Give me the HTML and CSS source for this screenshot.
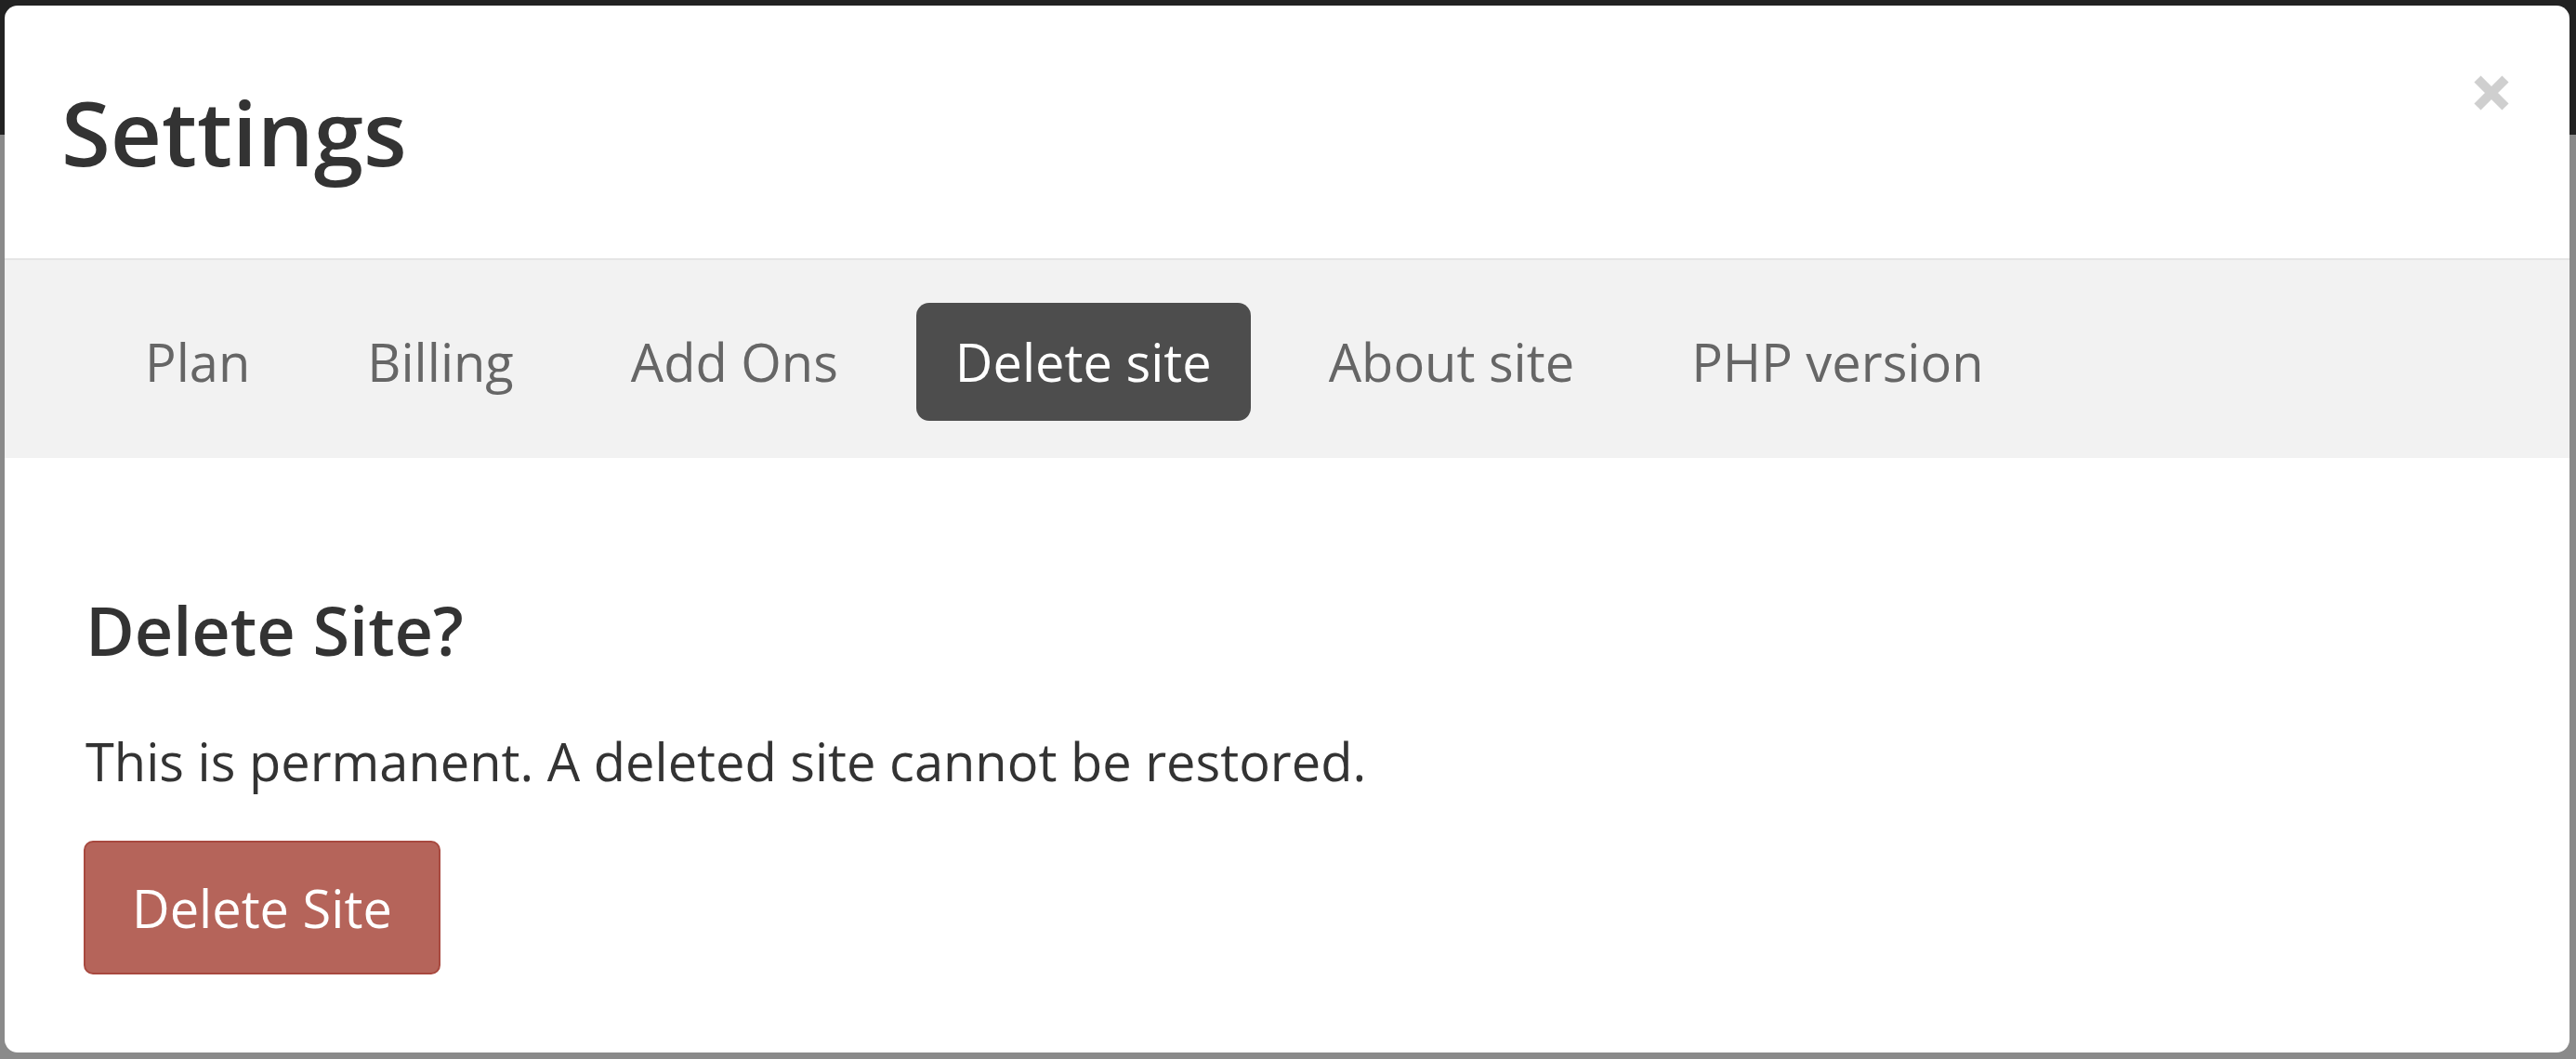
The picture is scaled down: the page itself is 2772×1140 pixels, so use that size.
FILE: index.html
```html
<!DOCTYPE html>
<html lang="en">
<head>
<meta charset="utf-8">
<title>Settings</title>
<link rel="stylesheet" href="styles.css">
</head>
<body>
<div class="modal">
  <div class="modal-header">
    <h1 class="modal-title">Settings</h1>
    <button class="close" aria-label="Close">
      <svg width="38" height="38" viewBox="0 0 38 38"><path d="M4 4L34 34M34 4L4 34" stroke="#cfcfcf" stroke-width="10" fill="none"/></svg>
    </button>
  </div>
  <nav class="tabs">
    <a class="tab">Plan</a>
    <a class="tab">Billing</a>
    <a class="tab">Add Ons</a>
    <a class="tab active">Delete site</a>
    <a class="tab">About site</a>
    <a class="tab">PHP version</a>
  </nav>
  <div class="modal-body">
    <h2 class="heading">Delete Site?</h2>
    <p class="text">This is permanent. A deleted site cannot be restored.</p>
    <button class="btn-danger">Delete Site</button>
  </div>
</div>
</body>
</html>
```

FILE: styles.css
```css
html, body {
  margin: 0;
  padding: 0;
}
body {
  width: 2772px;
  height: 1140px;
  overflow: hidden;
  background: linear-gradient(to bottom, #222222 0, #222222 145px, #8a8a8a 145px, #8a8a8a 100%);
  font-family: "Open Sans", "Liberation Sans", sans-serif;
  color: #333333;
}
.modal {
  margin: 6px 7px 0 5px;
  height: 1127px;
  background: #ffffff;
  border-radius: 14px;
  overflow: hidden;
  box-sizing: border-box;
}
.modal-header {
  position: relative;
  padding: 83px 59px 83px 61px;
  border-bottom: 2px solid #e5e5e5;
}
.modal-title {
  margin: 0;
  font-size: 96px;
  font-weight: 600;
  line-height: 105.6px;
  color: #333333;
}
.close {
  position: absolute;
  top: 75px;
  right: 65px;
  width: 38px;
  height: 38px;
  padding: 0;
  border: 0;
  background: none;
  display: block;
}
.close svg {
  display: block;
}
.tabs {
  display: flex;
  gap: 42px;
  padding: 46px 0 40px 109px;
  background: #f2f2f2;
}
.tab {
  display: block;
  padding: 23.5px 42px;
  font-size: 56px;
  line-height: 80px;
  color: #666666;
  border-radius: 14px;
}
.tab.active {
  background: #4d4d4d;
  color: #ffffff;
}
.modal-body {
  padding: 146px 87px 0 87px;
}
.heading {
  margin: 0;
  font-size: 72px;
  font-weight: 600;
  line-height: 79.2px;
  color: #333333;
}
.text {
  margin: 59px 0 0 0;
  font-size: 56px;
  line-height: 84px;
  color: #333333;
}
.btn-danger {
  display: block;
  margin: 44px 0 0 -2px;
  padding: 30px 50px;
  font-family: "Open Sans", "Liberation Sans", sans-serif;
  font-size: 56px;
  line-height: 80px;
  color: #ffffff;
  background: #b5645a;
  border: 2px solid #a8493f;
  border-radius: 10px;
}
```
